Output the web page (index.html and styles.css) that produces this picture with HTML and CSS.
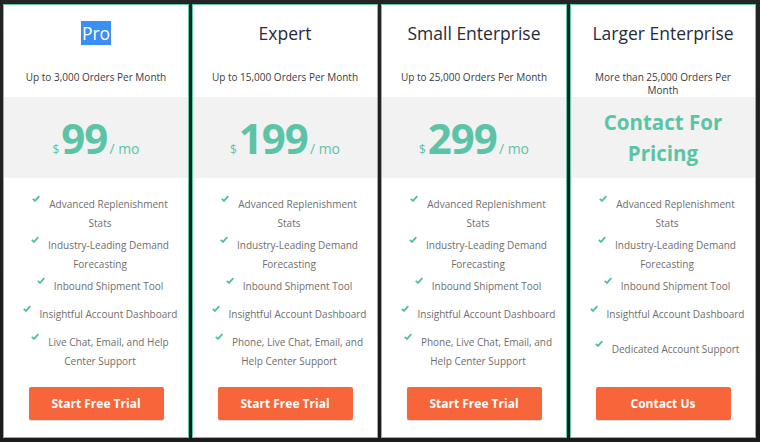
FILE: index.html
```html
<!DOCTYPE html>
<html>
<head>
<meta charset="utf-8">
<link rel="stylesheet" href="styles.css">
</head>
<body>
<div class="plans">
  <div class="card">
    <div class="head">
      <h2 class="title"><span class="sel">Pro</span></h2>
      <p class="sub">Up to 3,000 Orders Per Month</p>
    </div>
    <div class="price"><span class="cur">$</span><span class="amt">99</span><span class="per">/ mo</span></div>
    <ul class="feats">
      <li class="r1"><svg class="ck" viewBox="0 0 8 7"><path d="M0.8 3.8 L3 5.9 L7.3 1.2" /></svg>Advanced Replenishment Stats</li>
      <li class="r2"><svg class="ck" viewBox="0 0 8 7"><path d="M0.8 3.8 L3 5.9 L7.3 1.2" /></svg>Industry-Leading Demand Forecasting</li>
      <li class="r3"><svg class="ck" viewBox="0 0 8 7"><path d="M0.8 3.8 L3 5.9 L7.3 1.2" /></svg>Inbound Shipment Tool</li>
      <li class="r4"><svg class="ck" viewBox="0 0 8 7"><path d="M0.8 3.8 L3 5.9 L7.3 1.2" /></svg>Insightful Account Dashboard</li>
      <li class="r5"><svg class="ck" viewBox="0 0 8 7"><path d="M0.8 3.8 L3 5.9 L7.3 1.2" /></svg>Live Chat, Email, and Help Center Support</li>
    </ul>
    <a class="btn">Start Free Trial</a>
  </div>
  <div class="card">
    <div class="head">
      <h2 class="title">Expert</h2>
      <p class="sub">Up to 15,000 Orders Per Month</p>
    </div>
    <div class="price"><span class="cur">$</span><span class="amt">199</span><span class="per">/ mo</span></div>
    <ul class="feats">
      <li class="r1"><svg class="ck" viewBox="0 0 8 7"><path d="M0.8 3.8 L3 5.9 L7.3 1.2" /></svg>Advanced Replenishment Stats</li>
      <li class="r2"><svg class="ck" viewBox="0 0 8 7"><path d="M0.8 3.8 L3 5.9 L7.3 1.2" /></svg>Industry-Leading Demand Forecasting</li>
      <li class="r3"><svg class="ck" viewBox="0 0 8 7"><path d="M0.8 3.8 L3 5.9 L7.3 1.2" /></svg>Inbound Shipment Tool</li>
      <li class="r4"><svg class="ck" viewBox="0 0 8 7"><path d="M0.8 3.8 L3 5.9 L7.3 1.2" /></svg>Insightful Account Dashboard</li>
      <li class="r5"><svg class="ck" viewBox="0 0 8 7"><path d="M0.8 3.8 L3 5.9 L7.3 1.2" /></svg>Phone, Live Chat, Email, and Help Center Support</li>
    </ul>
    <a class="btn">Start Free Trial</a>
  </div>
  <div class="card">
    <div class="head">
      <h2 class="title">Small Enterprise</h2>
      <p class="sub">Up to 25,000 Orders Per Month</p>
    </div>
    <div class="price"><span class="cur">$</span><span class="amt">299</span><span class="per">/ mo</span></div>
    <ul class="feats">
      <li class="r1"><svg class="ck" viewBox="0 0 8 7"><path d="M0.8 3.8 L3 5.9 L7.3 1.2" /></svg>Advanced Replenishment Stats</li>
      <li class="r2"><svg class="ck" viewBox="0 0 8 7"><path d="M0.8 3.8 L3 5.9 L7.3 1.2" /></svg>Industry-Leading Demand Forecasting</li>
      <li class="r3"><svg class="ck" viewBox="0 0 8 7"><path d="M0.8 3.8 L3 5.9 L7.3 1.2" /></svg>Inbound Shipment Tool</li>
      <li class="r4"><svg class="ck" viewBox="0 0 8 7"><path d="M0.8 3.8 L3 5.9 L7.3 1.2" /></svg>Insightful Account Dashboard</li>
      <li class="r5"><svg class="ck" viewBox="0 0 8 7"><path d="M0.8 3.8 L3 5.9 L7.3 1.2" /></svg>Phone, Live Chat, Email, and Help Center Support</li>
    </ul>
    <a class="btn">Start Free Trial</a>
  </div>
  <div class="card">
    <div class="head">
      <h2 class="title">Larger Enterprise</h2>
      <p class="sub">More than 25,000 Orders Per Month</p>
    </div>
    <div class="price contact">Contact For Pricing</div>
    <ul class="feats">
      <li class="r1"><svg class="ck" viewBox="0 0 8 7"><path d="M0.8 3.8 L3 5.9 L7.3 1.2" /></svg>Advanced Replenishment Stats</li>
      <li class="r2"><svg class="ck" viewBox="0 0 8 7"><path d="M0.8 3.8 L3 5.9 L7.3 1.2" /></svg>Industry-Leading Demand Forecasting</li>
      <li class="r3"><svg class="ck" viewBox="0 0 8 7"><path d="M0.8 3.8 L3 5.9 L7.3 1.2" /></svg>Inbound Shipment Tool</li>
      <li class="r4"><svg class="ck" viewBox="0 0 8 7"><path d="M0.8 3.8 L3 5.9 L7.3 1.2" /></svg>Insightful Account Dashboard</li>
      <li class="r5 single"><svg class="ck" viewBox="0 0 8 7"><path d="M0.8 3.8 L3 5.9 L7.3 1.2" /></svg>Dedicated Account Support</li>
    </ul>
    <a class="btn">Contact Us</a>
  </div>
</div>
</body>
</html>
```

FILE: styles.css
```css
* { box-sizing: border-box; }
html, body { margin: 0; padding: 0; }
body {
  background: #2c2c2c;
  font-family: "Open Sans", "Liberation Sans", sans-serif;
  width: 760px;
  height: 442px;
  overflow: hidden;
}
.plans {
  display: grid;
  grid-template-columns: repeat(4, 186px);
  column-gap: 3px;
  padding: 4px 3px 0 3px;
  background: linear-gradient(#242424, #1b1b1b);
  height: 442px;
}
.card {
  background: #fff;
  border: 1px solid #5ec9ab;
  height: 434px;
  display: flex;
  flex-direction: column;
}
.head {
  flex: 0 0 92px;
  min-height: 0;
  padding-top: 16px;
  text-align: center;
}
.title {
  margin: 0;
  font-size: 17.5px;
  font-weight: 400;
  line-height: 24px;
  color: #272a3a;
}
.sel {
  background: #3a8ef6;
  color: #fff;
  padding: 0 1px;
}
.sub {
  margin: 26px 14px 0;
  font-size: 10px;
  line-height: 13px;
  color: #3a3a44;
}
.price {
  flex: 0 0 81px;
  background: #f2f2f2;
  font-size: 42px;
  line-height: 81px;
  text-align: center;
  color: #5bc4a7;
  white-space: nowrap;
}
.cur {
  font-size: 12px;
  line-height: 1;
  margin-right: 2px;
}
.amt {
  font-weight: 700;
  letter-spacing: -1px;
}
.per {
  font-size: 14px;
  line-height: 1;
  margin-left: 2px;
}
.contact {
  display: flex;
  align-items: center;
  justify-content: center;
  font-size: 20.5px;
  font-weight: 700;
  line-height: 31px;
  padding: 0 20px;
  white-space: normal;
}
.feats {
  list-style: none;
  margin: 0;
  padding: 17px 8px 0 16px;
  font-size: 10px;
  line-height: 19px;
  color: #6e6e6e;
  text-align: center;
}
.feats li { margin-bottom: 3px; }
.feats li.r3, .feats li.r4 { margin-bottom: 9px; }
.feats li.single { margin-top: 16px; }
.ck {
  width: 8px;
  height: 7px;
  margin-right: 9px;
  vertical-align: 6px;
  fill: none;
  stroke: #4fbf9f;
  stroke-width: 1.8;
}
.btn {
  display: block;
  margin: auto auto 17px;
  width: 135px;
  height: 33px;
  line-height: 33px;
  background: #f7663a;
  border-radius: 2px;
  color: #fff;
  font-weight: 700;
  font-size: 12px;
  text-align: center;
  box-shadow: 0 1px 1px rgba(0,0,0,0.15);
}
```
